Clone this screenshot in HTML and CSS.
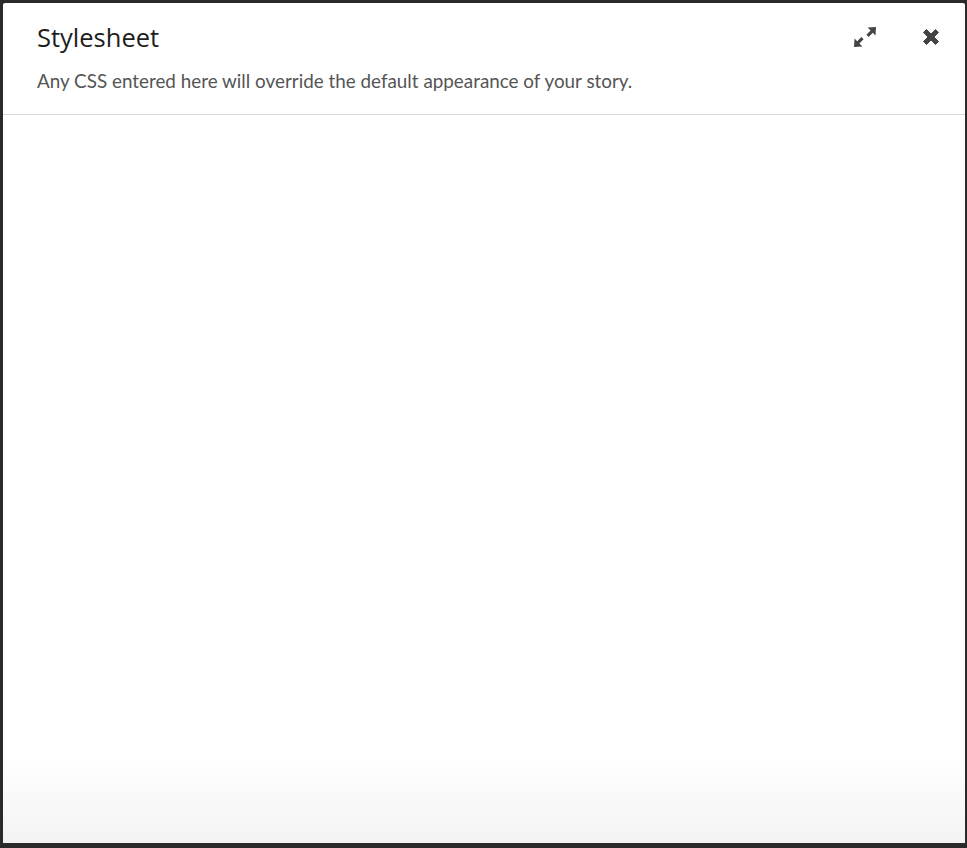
FILE: index.html
```html
<!DOCTYPE html>
<html>
<head>
<meta charset="utf-8">
<link rel="stylesheet" href="styles.css">
</head>
<body>
<div class="modal">
  <header class="modal-header">
    <div class="header-text">
      <h1 class="title">Stylesheet</h1>
      <p class="subtitle">Any CSS entered here will override the default appearance of your story.</p>
    </div>
    <div class="actions">
      <button class="icon-btn expand" aria-label="Maximize">
        <svg width="22" height="20" viewBox="0 0 22 20">
          <path d="M22 0 L21.5 8.5 L18.8 5.8 L14.6 10 L12.4 7.8 L16.6 3.6 L13.6 0.6 Z" fill="#444"/>
          <path d="M0 20 L0.5 11.5 L3.2 14.2 L7.4 10 L9.6 12.2 L5.4 16.4 L8.4 19.4 Z" fill="#444"/>
        </svg>
      </button>
      <button class="icon-btn close" aria-label="Close">
        <svg width="18" height="18" viewBox="0 0 18 18">
          <path d="M1.5 4.5 L4.5 1.5 L9 6 L13.5 1.5 L16.5 4.5 L12 9 L16.5 13.5 L13.5 16.5 L9 12 L4.5 16.5 L1.5 13.5 L6 9 Z" fill="#444" stroke="#444" stroke-width="1" stroke-linejoin="round"/>
        </svg>
      </button>
    </div>
  </header>
  <div class="modal-body"></div>
</div>
</body>
</html>
```
FILE: styles.css
```css
html, body {
  margin: 0;
  padding: 0;
  height: 100%;
  background: #2a2a2a;
}
body {
  box-sizing: border-box;
  padding: 3px 2px 5px 3px;
  display: flex;
}
.modal {
  flex: 1;
  display: flex;
  flex-direction: column;
  background: #fff;
  border-radius: 2px;
  font-family: "Lato", "Noto Sans", sans-serif;
}
.modal-header {
  display: flex;
  justify-content: space-between;
  align-items: flex-start;
  padding: 18px 25px 0 34px;
  height: 93px;
  box-sizing: content-box;
  border-bottom: 1px solid #d8d8d8;
}
.title {
  margin: 0;
  font-size: 25.5px;
  font-weight: 400;
  color: #1e1e1e;
  line-height: 32px;
  font-family: "Open Sans", sans-serif;
}
.subtitle {
  margin: 16px 0 0;
  font-size: 18.85px;
  color: #555;
  line-height: 24px;
}
.actions {
  display: flex;
  align-items: center;
  gap: 46px;
  padding-top: 6px;
}
.icon-btn {
  border: 0;
  background: none;
  padding: 0;
  display: flex;
}
.modal-body {
  flex: 1;
  background: linear-gradient(to bottom, #fff 0%, #fff 88%, #f3f3f3 100%);
}
```
